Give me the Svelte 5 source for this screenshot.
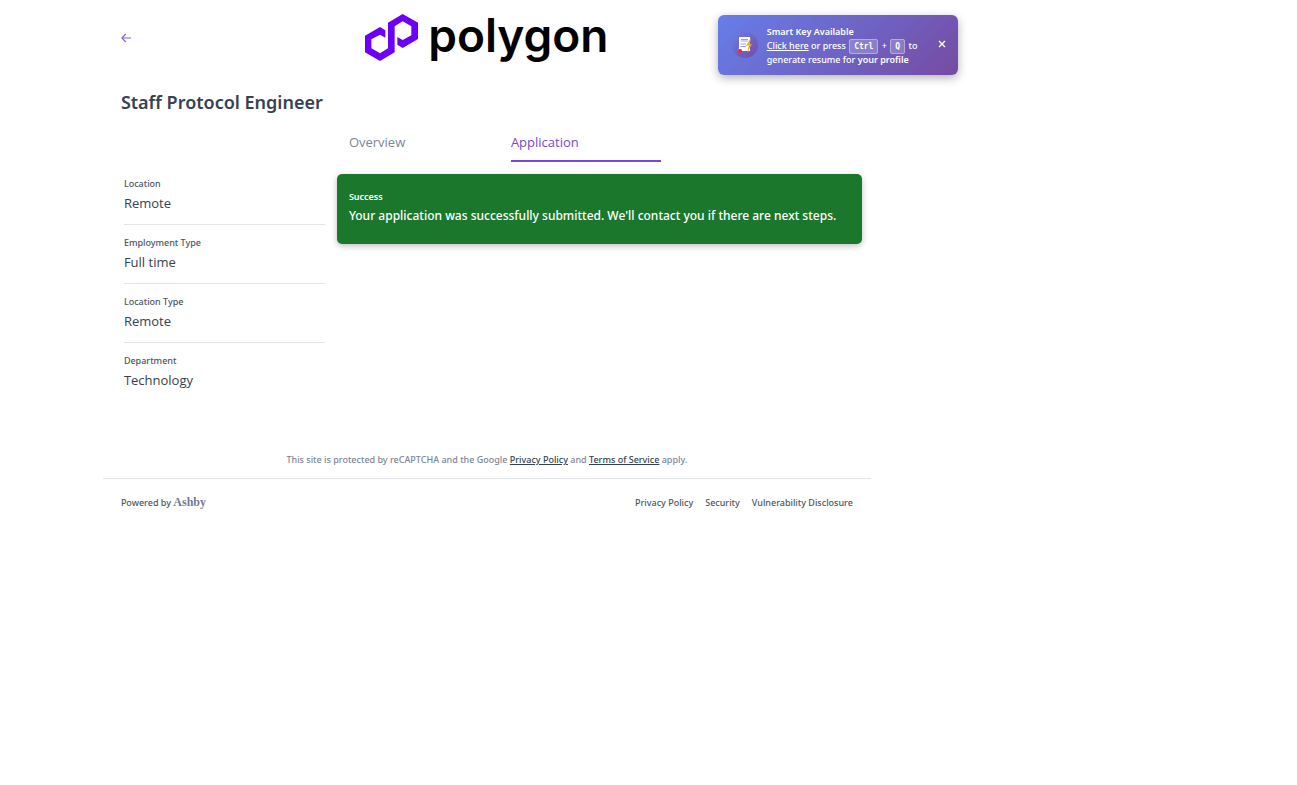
<script>
  const details = [
    { label: 'Location', value: 'Remote' },
    { label: 'Employment Type', value: 'Full time' },
    { label: 'Location Type', value: 'Remote' },
    { label: 'Department', value: 'Technology' }
  ];
  const footerLinks = ['Privacy Policy', 'Security', 'Vulnerability Disclosure'];
  let toastOpen = $state(true);
</script>

<div class="page">
  <div class="container">
    <header>
      <a class="back" href="#jobs" aria-label="Back to jobs">
        <svg viewBox="0 0 10 10" width="10" height="10" aria-hidden="true">
          <path d="M10 5H.8M4.8 1L.8 5l4 4" fill="none" stroke="currentColor" stroke-width="1.2" />
        </svg>
      </a>
      <a class="logo" href="#home">
        <svg viewBox="30 27 159 141" width="53" height="47" aria-hidden="true">
          <path
            fill="#6c00f6"
            d="M143 27L99 53V130L75 145L49 130V103L75 89L91 98V76L75 66L30 92V142L75 168L119 142V64L143 49L169 64V91L143 105L127 96V119L143 129L189 102V53Z"
          />
        </svg>
        <span>polygon</span>
      </a>
    </header>

    <h1>Staff Protocol Engineer</h1>

    <div class="columns">
      <aside>
        <dl>
          {#each details as item}
            <div class="detail">
              <dt>{item.label}</dt>
              <dd>{item.value}</dd>
            </div>
          {/each}
        </dl>
      </aside>
      <main>
        <nav class="tabs">
          <a href="#overview">Overview</a>
          <a href="#application" class="active" aria-current="page">Application</a>
        </nav>
        <div class="alert" role="status">
          <strong>Success</strong>
          <p>Your application was successfully submitted. We'll contact you if there are next steps.</p>
        </div>
      </main>
    </div>

    <p class="captcha">
      This site is protected by reCAPTCHA and the Google <a href="#privacy">Privacy Policy</a> and
      <a href="#terms">Terms of Service</a> apply.
    </p>

    <footer>
      <a class="powered" href="#ashby">Powered by <b>Ashby</b></a>
      <nav>
        {#each footerLinks as link}
          <a href="#footer">{link}</a>
        {/each}
      </nav>
    </footer>
  </div>

  {#if toastOpen}
    <div class="toast">
      <span class="badge">
        <svg viewBox="0 0 26 26" width="26" height="26" aria-hidden="true">
          <path d="M7 5H18V19H8Q6 19 7 16Z" fill="#fff" />
          <path d="M9 7.5H16M8.500 12H14M8.500 14.500H14" stroke="#91a2e8" stroke-width="1" />
          <path d="M9 9H16" stroke="#b9c4f4" stroke-width="1.500" />
          <path d="M19 5.500L14 14L17 13.500L15 21L20 12L17.500 12.500Z" fill="#f6a21d" />
          <rect x="6" y="17" width="4" height="4" rx="1.500" fill="#dc3545" />
        </svg>
      </span>
      <div class="message">
        <strong>Smart Key Available</strong>
        <p>
          <a href="#generate">Click here</a> or press <kbd>Ctrl</kbd> + <kbd>Q</kbd> to
          generate resume for <b>your profile</b>
        </p>
      </div>
      <button type="button" aria-label="Close" onclick={() => (toastOpen = false)}>
        <svg viewBox="0 0 8 8" width="8" height="8" aria-hidden="true">
          <path d="M1 1L7 7M7 1L1 7" stroke="currentColor" stroke-width="1.400" />
        </svg>
      </button>
    </div>
  {/if}
</div>

<style>
  :global(body) {
    margin: 0;
    background: #fff;
  }
  .page {
    position: relative;
    width: calc(75% + 1px);
    color: #374151;
    font-family: 'Open Sans', 'Noto Sans', sans-serif;
    font-size: 13px;
    line-height: 20px;
  }
  .page * {
    box-sizing: border-box;
  }
  a {
    color: inherit;
    text-decoration: none;
  }
  .container {
    max-width: 768px;
    margin: 0 auto;
  }
  header {
    display: grid;
    grid-template-columns: 1fr auto 1fr;
    align-items: center;
    height: 75px;
    padding: 0 18px;
  }
  .back {
    display: flex;
    color: #8a63de;
  }
  .logo {
    display: flex;
    align-items: flex-start;
    gap: 10px;
    color: #000;
    font: 600 46px/42px Inter, sans-serif;
  }
  h1 {
    margin: 0;
    padding: 13px 18px 12px;
    font-family: 'Noto Sans', sans-serif;
    font-size: 18px;
    font-weight: 600;
    line-height: 28px;
  }
  .columns {
    display: grid;
    grid-template-columns: 3fr 7fr;
    padding: 0 9px;
  }
  aside {
    padding: 38px 12px 0;
  }
  dl,
  dd {
    margin: 0;
  }
  .detail {
    padding: 11px 0;
  }
  .detail + .detail {
    border-top: 1px solid #e2e4e7;
  }
  dt,
  .alert strong,
  .captcha,
  footer,
  .toast {
    font-family: 'Noto Sans', sans-serif;
    font-size: 9px;
    font-weight: 500;
  }
  dt {
    line-height: 14px;
    color: #4b5563;
  }
  dd {
    padding-top: 2px;
  }
  .tabs {
    display: flex;
    gap: 12px;
    padding: 4px 12px 12px;
  }
  .tabs a {
    width: 150px;
    height: 30px;
    color: #7d8596;
  }
  .tabs .active {
    color: #7549d8;
    border-bottom: 2px solid #7549d8;
  }
  .alert {
    padding: 15px 12px;
    border-radius: 5px;
    background: #1b772b;
    color: #fff;
    box-shadow: 0 2px 6px rgb(0 0 0 / 25%);
  }
  .alert strong {
    display: block;
    font-weight: 600;
    line-height: 16px;
  }
  .alert p {
    margin: 1px 0 3px;
    font-family: 'Noto Sans', sans-serif;
    font-size: 12px;
    font-weight: 500;
  }
  .captcha {
    margin: 0;
    padding: 51px 18px 11px;
    border-bottom: 1px solid #e2e4e7;
    color: #7d8596;
    line-height: 15px;
    text-align: center;
  }
  .captcha a {
    color: #374151;
    text-decoration: underline;
  }
  footer {
    display: flex;
    align-items: center;
    justify-content: space-between;
    padding: 14px 18px;
    color: #4b5563;
  }
  footer nav {
    display: flex;
    gap: 12px;
  }
  .powered b {
    color: #737b91;
    font: 700 12px/16px 'Liberation Serif', serif;
  }
  .toast {
    position: absolute;
    top: 15px;
    right: 16px;
    display: flex;
    align-items: center;
    width: 240px;
    height: 60px;
    padding: 0 12px 0 14px;
    border-radius: 6px;
    background: linear-gradient(135deg, #667eea, #764ba2);
    box-shadow: 0 3px 10px rgb(0 0 0 / 30%);
    color: #fff;
    line-height: 14px;
  }
  .badge {
    display: flex;
    margin-right: 9px;
    border-radius: 50%;
    background: linear-gradient(135deg, #667eea, #764ba2);
  }
  .message {
    flex: 1;
    padding-top: 2px;
  }
  .message strong,
  .message b {
    font-weight: 600;
  }
  .message strong {
    display: block;
  }
  .message p {
    width: 155px;
    margin: 0;
  }
  .message a {
    text-decoration: underline;
  }
  kbd {
    padding: 2px 4px;
    border: 1px solid rgb(255 255 255 / 35%);
    border-radius: 2px;
    margin: 0 1px;
    background: rgb(255 255 255 / 20%);
    font: 700 8px/12px 'DejaVu Sans Mono', monospace;
  }
  button {
    display: flex;
    padding: 0 0 2px;
    border: 0;
    background: none;
    color: inherit;
    cursor: pointer;
  }
</style>
